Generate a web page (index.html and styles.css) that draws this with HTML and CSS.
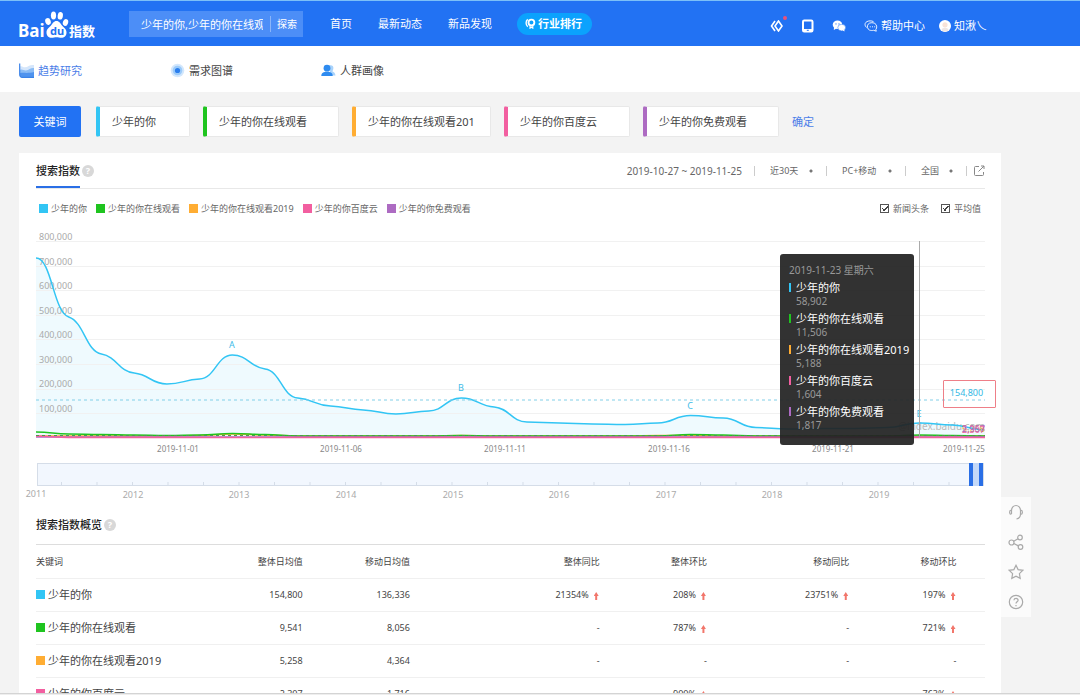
FILE: index.html
```html
<!DOCTYPE html>
<html lang="zh-CN">
<head>
<meta charset="utf-8">
<meta name="viewport" content="width=device-width, initial-scale=1">
<title>百度指数</title>
<link rel="stylesheet" href="styles.css">
</head>
<body>
<header class="topbar">
  <a class="logo" href="#" aria-label="Baidu 指数">
    <svg viewBox="0 0 80 30" width="80" height="30">
      <text class="logo-latin" x="0" y="26">Bai</text>
      <g fill="#fff">
        <ellipse cx="30" cy="10.500" rx="2.700" ry="3.400" transform="rotate(-20 30 10.500)"/>
        <ellipse cx="35.500" cy="4.500" rx="2.600" ry="3.900"/>
        <ellipse cx="42.300" cy="4.800" rx="2.600" ry="3.800" transform="rotate(8 42.300 4.800)"/>
        <ellipse cx="47.500" cy="11.500" rx="2.600" ry="3.400" transform="rotate(20 47.500 11.500)"/>
        <path d="M38.500 10c2.800 0 4 2.500 5.500 4.400 1.800 2.200 4.500 3.400 4.500 7.100 0 3.500-2.400 5.300-5.100 5.300-1.700 0-3.100-.6-4.900-.6s-3.200.6-4.900.6c-2.800 0-5.100-1.900-5.100-5.300 0-3.700 2.700-4.900 4.500-7.100 1.500-1.900 2.700-4.400 5.500-4.400z"/>
      </g>
      <text class="logo-du" x="32" y="24">du</text>
      <text class="logo-cjk" x="51" y="25">指数</text>
    </svg>
  </a>
  <form class="search">
    <input class="search-input" type="text" aria-label="关键词搜索" value="少年的你,少年的你在线观看,少年的你在线观看2019">
    <button class="search-button" type="button">探索</button>
  </form>
  <nav class="main-nav">
    <a href="#">首页</a>
    <a href="#">最新动态</a>
    <a href="#">新品发现</a>
  </nav>
  <a class="rank-pill" href="#">
    <svg viewBox="0 0 12 12" width="11" height="11" fill="none" stroke="#fff"><path d="M3 1.500C.6 3.500.6 7.500 3 9.500" stroke-width="1.500"/><circle cx="7" cy="5" r="3.200" stroke-width="2"/><path d="M5.500 8v3l1.500-1 1.500 1V8" stroke-width="1.300"/></svg>
    行业排行
  </a>
  <div class="tools">
    <a class="tool-code" href="#" aria-label="开放平台">
      <svg viewBox="0 0 14 12" width="14" height="12" fill="none" stroke="#fff" stroke-width="1.600"><path d="M5 1 1.500 6 5 11"/><path d="M8.500 1 5 6l3.500 5L12 6z"/></svg>
      <span class="badge"></span>
    </a>
    <a href="#" aria-label="手机版">
      <svg viewBox="0 0 12 14" width="12" height="14"><rect x="1" y="1.500" width="9.500" height="11" rx="1.200" fill="none" stroke="#fff" stroke-width="2"/><path d="M1 10h9.500v3H1z" fill="#fff"/><path d="M4.800 11.300h2" stroke="#2272f3"/></svg>
    </a>
    <a href="#" aria-label="微信">
      <svg viewBox="0 0 14 12" width="14" height="12"><ellipse cx="5.500" cy="4.800" rx="4.800" ry="4.200" fill="#fff"/><path d="M2 7.500 1.800 10 4.500 8.500z" fill="#fff"/><ellipse cx="9.700" cy="7.600" rx="3.900" ry="3.300" fill="#fff" stroke="#2272f3" stroke-width=".5"/><path d="m10.500 10.300 2 1.200-.2-2z" fill="#fff"/><g fill="#2272f3"><circle cx="4" cy="3.900" r=".6"/><circle cx="7" cy="3.900" r=".6"/></g></svg>
    </a>
    <a class="tool-text tool-help" href="#">
      <svg viewBox="0 0 14 12" width="14" height="12" fill="none" stroke="#fff" stroke-width=".9"><path d="M2.500 7.500C.5 5.500.5 3 2.800 1.700 4.600.6 7.500.6 9.500 1.600"/><path d="M11.800 9.600c1.600-1.900 1-5.100-1-6.200-2.200-1.200-5.400-.8-6.600.8-1.500 2-.9 4.700 1.200 5.800 1.300.6 2.900.7 4.200.3l2.700.9z"/><path d="M5.800 6.800h1M8 6.800h1M10.200 6.800h1"/></svg>
      帮助中心
    </a>
    <a class="tool-text tool-user" href="#">
      <svg viewBox="0 0 12 12" width="12" height="12"><circle cx="6" cy="6" r="6" fill="#fff"/><circle cx="6" cy="4.800" r="2.600" fill="#f8e3d8"/><path d="M2.500 10c.5-3 6.500-3 7 0-2 2-5 2-7 0z" fill="#eee6e4"/></svg>
      知湫乀
    </a>
  </div>
</header>

<nav class="subnav">
  <a class="subnav-link is-active" href="#">
    <svg viewBox="0 0 15 15" width="15" height="15"><path d="M1 3.500c2-1 3 1 5 .8 3-.3 5-3 9-2.300v12H3a2 2 0 0 1-2-2z" fill="#d5e6fb"/><path d="M1 7c2-1.500 3.500.6 6 .4C10 7 12 4.500 15 5v9H3a2 2 0 0 1-2-2z" fill="#8bbcf5"/><path d="M1 10c4-.5 9 .5 14-1v5.500H3a2 2 0 0 1-2-2z" fill="#4f93ee"/><path d="M.7.500v11.300a2.500 2.500 0 0 0 2.500 2.500H15" fill="none" stroke="#3a82e8" stroke-width="1.200"/></svg>
    趋势研究
  </a>
  <a class="subnav-link" href="#">
    <svg viewBox="0 0 15 15" width="15" height="15"><circle cx="7.500" cy="7.500" r="6.800" fill="#d3e7fc"/><circle cx="7.500" cy="7.500" r="4.800" fill="#9ccbfa"/><circle cx="7.500" cy="7.500" r="2.600" fill="#2a7eed"/></svg>
    需求图谱
  </a>
  <a class="subnav-link" href="#">
    <svg viewBox="0 0 15 15" width="15" height="15"><path d="M8 2.500c3-1 5 .8 4.300 3.500-.3 1.200-.8 1.800-.8 2.500 1.500.8 2.800 1.500 3 4h-5z" fill="#a9d3fb"/><circle cx="6" cy="5.200" r="3.400" fill="#2e8bf0"/><path d="M.3 13c0-3 2.200-4.300 5.700-4.300s5.700 1.300 5.700 4.300z" fill="#2e8bf0"/></svg>
    人群画像
  </a>
</nav>

<main class="content">
  <form class="keywords">
    <button class="keyword-button" type="button">关键词</button>
    <input class="chip chip-short c-blue" type="text" aria-label="关键词一" value="少年的你">
    <input class="chip chip-long c-green" type="text" aria-label="关键词二" value="少年的你在线观看">
    <input class="chip chip-longest c-orange" type="text" aria-label="关键词三" value="少年的你在线观看2019">
    <input class="chip chip-medium c-pink" type="text" aria-label="关键词四" value="少年的你百度云">
    <input class="chip chip-long c-purple" type="text" aria-label="关键词五" value="少年的你免费观看">
    <button class="confirm" type="button">确定</button>
  </form>

  <section class="card">
    <div class="card-head">
      <h2 class="tab-title">搜索指数</h2>
      <span class="hint">?</span>
      <div class="filters">
        <span class="dates">2019-10-27 ~ 2019-11-25</span>
        <div class="filter filter-range"><select aria-label="时间范围"><option>近30天</option></select></div>
        <div class="filter filter-device"><select aria-label="设备"><option>PC+移动</option></select></div>
        <div class="filter filter-region"><select aria-label="地区"><option>全国</option></select></div>
        <button class="export" type="button" aria-label="导出">
          <svg viewBox="0 0 12 12" width="12" height="12" fill="none" stroke="#888"><path d="M6 1.500H2.500a1 1 0 0 0-1 1v7a1 1 0 0 0 1 1h7a1 1 0 0 0 1-1V7"/><path d="M8 1h3v3M11 1 5.500 6.500"/></svg>
        </button>
      </div>
    </div>

    <div class="legend-row">
      <ul class="legend">
        <li><i class="swatch c-blue"></i>少年的你</li>
        <li><i class="swatch c-green"></i>少年的你在线观看</li>
        <li><i class="swatch c-orange"></i>少年的你在线观看2019</li>
        <li><i class="swatch c-pink"></i>少年的你百度云</li>
        <li><i class="swatch c-purple"></i>少年的你免费观看</li>
      </ul>
      <div class="toggles">
        <label><input type="checkbox" checked>新闻头条</label>
        <label><input type="checkbox" checked>平均值</label>
      </div>
    </div>

    <div class="chart">
      <svg class="plot" id="plot" viewBox="0 0 949 230">
        <path class="grid" d="M0 13.500H949M0 38.500H949M0 62.500H949M0 87.500H949M0 111.500H949M0 136.500H949M0 161.500H949M0 185.500H949"/>
        <g class="y-labels">
          <text x="3" y="12">800,000</text><text x="3" y="37">700,000</text><text x="3" y="61">600,000</text><text x="3" y="86">500,000</text>
          <text x="3" y="110">400,000</text><text x="3" y="135">300,000</text><text x="3" y="159">200,000</text><text x="3" y="184">100,000</text>
        </g>
        <text class="watermark" x="949" y="202">@index.baidu.com</text>
        <g id="series"></g>
        <path class="average" d="M0 172H949"/>
        <path class="average average-green" d="M0 207.500H949"/>
        <g class="peaks">
          <text x="196" y="120">A</text><text x="425" y="163">B</text><text x="654" y="181">C</text><text x="883" y="189">E</text>
        </g>
        <path class="cursor" d="M883.500 13V210"/>
        <g class="end-labels">
          <text x="949" y="204" fill="#ffad33">5,258</text><text x="949" y="205" fill="#f25fa0">2,307</text><text x="949" y="204" fill="#ad6bc2">2,957</text>
        </g>
        <g class="x-labels">
          <text x="142" y="224">2019-11-01</text><text x="305" y="224">2019-11-06</text><text x="469" y="224">2019-11-11</text>
          <text x="633" y="224">2019-11-16</text><text x="797" y="224">2019-11-21</text><text x="928" y="224">2019-11-25</text>
        </g>
      </svg>
      <div class="average-tag">154,800</div>
      <div class="tooltip">
        <p class="tooltip-date">2019-11-23 星期六</p>
        <dl>
          <dt class="c-blue">少年的你</dt><dd>58,902</dd>
          <dt class="c-green">少年的你在线观看</dt><dd>11,506</dd>
          <dt class="c-orange">少年的你在线观看2019</dt><dd>5,188</dd>
          <dt class="c-pink">少年的你百度云</dt><dd>1,604</dd>
          <dt class="c-purple">少年的你免费观看</dt><dd>1,817</dd>
        </dl>
      </div>
    </div>

    <svg class="timeline" viewBox="0 0 949 47">
      <rect x="1.500" y="5.500" width="946" height="22" fill="#f2f7fe" stroke="#d5dde8"/>
      <path id="ticks" stroke="#d5dde8"/>
      <rect x="937" y="5" width="6" height="23" fill="#c3d8f8"/>
      <rect x="933" y="5" width="4" height="23" fill="#2a6fe6"/>
      <rect x="943" y="5" width="4" height="23" fill="#2a6fe6"/>
      <g class="years">
        <text x="0" y="39">2011</text><text x="97" y="40">2012</text><text x="203" y="40">2013</text><text x="310" y="40">2014</text><text x="417" y="40">2015</text>
        <text x="523" y="40">2016</text><text x="630" y="40">2017</text><text x="736" y="40">2018</text><text x="843" y="40">2019</text>
      </g>
    </svg>

    <div class="overview-head">
      <h2>搜索指数概览</h2>
      <span class="hint">?</span>
    </div>
    <table class="overview">
      <colgroup><col class="col-name"><col class="col-near"><col class="col-near"><col class="col-far"><col class="col-near"><col class="col-mid"><col class="col-near"><col></colgroup>
      <thead>
        <tr><th>关键词</th><th>整体日均值</th><th>移动日均值</th><th>整体同比</th><th>整体环比</th><th>移动同比</th><th>移动环比</th><td></td></tr>
      </thead>
      <tbody>
        <tr><th><i class="swatch c-blue"></i>少年的你</th><td>154,800</td><td>136,336</td><td class="up">21354%</td><td class="up">208%</td><td class="up">23751%</td><td class="up">197%</td><td></td></tr>
        <tr><th><i class="swatch c-green"></i>少年的你在线观看</th><td>9,541</td><td>8,056</td><td>-</td><td class="up">787%</td><td>-</td><td class="up">721%</td><td></td></tr>
        <tr><th><i class="swatch c-orange"></i>少年的你在线观看2019</th><td>5,258</td><td>4,364</td><td>-</td><td>-</td><td>-</td><td>-</td><td></td></tr>
        <tr><th><i class="swatch c-pink"></i>少年的你百度云</th><td>2,307</td><td>1,716</td><td></td><td class="up">900%</td><td></td><td class="up">763%</td><td></td></tr>
      </tbody>
    </table>
  </section>
</main>

<aside class="side-tools">
  <button type="button" aria-label="客服"><svg viewBox="0 0 16 16" width="16" height="16"><path d="M3.500 10V6.500a4.500 5 0 0 1 9 0V10c0 3-1.500 4.500-4 5M3.300 6C1 6.300 1 10.200 3.300 10.500M12.700 6c2.300.3 2.300 4.200 0 4.500"/></svg></button>
  <button type="button" aria-label="分享"><svg viewBox="0 0 16 16" width="16" height="16"><circle cx="3.500" cy="8.500" r="2.500"/><circle cx="12" cy="3.500" r="2.300"/><circle cx="12.500" cy="13" r="2.300"/><path d="m5.700 7.300 4.300-2.600M5.800 9.500l4.600 2.400"/></svg></button>
  <button type="button" aria-label="收藏"><svg viewBox="0 0 16 16" width="16" height="16"><path d="m8 1.300 2.100 4.300 4.800.7-3.500 3.300.8 4.800L8 12.200l-4.200 2.200.8-4.800L1.100 6.300l4.800-.7z"/></svg></button>
  <button type="button" aria-label="帮助"><svg viewBox="0 0 16 16" width="16" height="16"><circle cx="8" cy="8" r="6.700"/><path d="M5.900 6.300c.2-2.600 4.400-2.400 4.200 0-.1 1.500-2.100 1.500-2.100 3.200M8 11v1.200"/></svg></button>
</aside>
<footer class="statusbar"></footer>
<script src="chart.js"></script>
</body>
</html>
```

FILE: styles.css
```css
* { box-sizing: border-box; }

body {
  margin: 0;
  height: 100vh;
  display: flex;
  flex-direction: column;
  overflow: hidden;
  background: #f3f3f3;
  color: #444;
  font: 11px/16px "Noto Sans", "Noto Sans CJK SC", sans-serif;
}

a { color: inherit; text-decoration: none; }
h2, p, dl, dd, ul { margin: 0; padding: 0; }
button, input, select { font: inherit; color: inherit; border: 0; margin: 0; padding: 0; background: none; }
svg { display: block; flex: none; }

.c-blue { --tone: #32c5f4; }
.c-green { --tone: #1fc41f; }
.c-orange { --tone: #ffad33; }
.c-pink { --tone: #f25fa0; }
.c-purple { --tone: #ad6bc2; }

/* Top bar */
.topbar {
  flex: none;
  display: flex;
  align-items: center;
  height: 46px;
  padding: 0 93px 0 18px;
  border-top: 1px solid #7cc0f8;
  background: #2272f3;
  color: #fff;
}
.logo { margin: 5px 31px 0 0; }
.logo text { fill: #fff; font-family: "Noto Sans", "Noto Sans CJK SC", sans-serif; font-weight: 700; }
.logo .logo-latin { font-size: 17px; }
.logo .logo-du { font-size: 11px; fill: #2272f3; }
.logo .logo-cjk { font-size: 13px; }

.search { display: flex; align-items: center; width: 174px; height: 26px; padding-left: 12px; background: #4c8ef7; }
.search-input { width: 122px; height: 24px; }
.search-button { flex: 1; height: 16px; margin-left: 7px; border-left: 1px solid #8ab5fa; font-size: 10px; }

.main-nav { display: flex; gap: 26px; margin: 0 25px 0 27px; }
.rank-pill {
  display: flex;
  align-items: center;
  gap: 2px;
  height: 22px;
  padding: 0 10px 0 8px;
  border-radius: 11px;
  background: #0ba2fd;
  font-weight: 700;
}
.tools { display: flex; align-items: center; gap: 18px; margin: 4px 0 0 auto; }
.tool-code { position: relative; }
.badge { position: absolute; top: -4px; right: -3px; width: 4px; height: 4px; border-radius: 50%; background: #e8527a; }
.tool-text { display: flex; align-items: center; gap: 3px; }
.tool-user { margin-left: -4px; }

/* Section navigation */
.subnav { flex: none; display: flex; gap: 88px; height: 46px; padding: 3px 19px 0; background: #fff; }
.subnav-link { display: flex; align-items: center; gap: 4px; }
.is-active { color: #4a7de8; }

/* Keywords */
.content { flex: 1; min-height: 0; overflow: hidden; padding: 14px 79px 0 19px; }
.keywords { display: flex; gap: 13px; height: 31px; margin-bottom: 16px; }
.keyword-button { width: 62px; margin-right: 2px; border-radius: 2px; background: #2272f3; color: #fff; }
.chip {
  min-width: 0;
  padding: 0 15px 0 12px;
  border: 1px solid #e8e8e8;
  border-left: 4px solid var(--tone);
  border-radius: 2px;
  background: #fff;
}
.chip-short { width: 94px; }
.chip-medium { width: 126px; }
.chip-long { width: 136px; }
.chip-longest { width: 139px; }
.confirm { color: #4a7de8; }

/* Card */
.card { padding: 0 16px 100px 17px; background: #fff; }
.card-head { display: flex; height: 36px; border-bottom: 1px solid #e8e8e8; }
h2 { font-size: 11px; line-height: 16px; font-weight: 500; color: #222; }
.tab-title { padding-top: 10px; border-bottom: 2px solid #2a6fe6; }
.hint {
  width: 12px;
  height: 12px;
  border-radius: 50%;
  background: #d8d8d8;
  color: #fff;
  font-size: 9px;
  line-height: 12px;
  font-weight: 700;
  text-align: center;
}
.card-head .hint { margin: 12px 0 0 2px; }
.filters { display: flex; align-items: center; margin-left: auto; font-size: 9px; color: #666; }
.dates { margin-right: 12px; font-size: 10px; }
.filter { display: flex; align-items: center; height: 10px; padding-left: 15px; border-left: 1px solid #ccc; }
.filter select {
  width: 100%;
  appearance: none;
  background: radial-gradient(circle, #777 1px, transparent 2px) right 13px center / 4px 4px no-repeat;
}
.filter-range { width: 72px; }
.filter-device { width: 79px; }
.filter-region { width: 61px; }
.export { display: flex; align-items: center; height: 10px; padding-left: 6px; border-left: 1px solid #ccc; }

.legend-row { display: flex; justify-content: space-between; align-items: center; height: 39px; padding: 0 4px 0 3px; font-size: 9px; color: #666; }
.legend { display: flex; gap: 9px; list-style: none; }
.legend li { display: flex; align-items: center; gap: 3px; }
.swatch { display: inline-block; flex: none; width: 9px; height: 9px; background: var(--tone); }
.toggles { display: flex; gap: 12px; }
.toggles label { display: flex; align-items: center; gap: 4px; }
.toggles input {
  appearance: none;
  width: 9px;
  height: 9px;
  border: 1px solid #555;
}
.toggles input:checked {
  background:
    linear-gradient(45deg, transparent 40%, #444 40% 60%, transparent 60%) 1px 3px / 3px 3px no-repeat,
    linear-gradient(-45deg, transparent 40%, #444 40% 60%, transparent 60%) 2px 1px / 5px 5px no-repeat;
}

/* Chart */
.chart { position: relative; }
.plot, .timeline { width: 100%; height: auto; overflow: visible; }
.grid { stroke: #f1f1f1; }
.y-labels, .years { fill: #aaa; font-size: 9px; }
.years, .x-labels, .peaks { text-anchor: middle; }
.x-labels { fill: #888; font-size: 8px; }
.peaks { fill: #3dbce8; font-size: 9px; }
.watermark { fill: #bbb; font-size: 10px; text-anchor: end; }
.end-labels { font-size: 9px; text-anchor: end; }
.line { fill: none; stroke: var(--tone); stroke-width: 1.5px; }
.area { fill: #effafe; }
.average { fill: none; stroke: #82cfe8; stroke-dasharray: 3 3; }
.average-green { stroke: #4e9a4e; }
.cursor { stroke: #aaa; }
.average-tag {
  position: absolute;
  top: 152px;
  right: -11px;
  width: 53px;
  padding: 4px 6px 6px 0;
  border: 1px solid #ee7f88;
  border-radius: 1px;
  color: #32b8e4;
  font-size: 9px;
  text-align: center;
}
.tooltip {
  position: absolute;
  top: 26px;
  right: 71px;
  width: 134px;
  padding: 9px 0 11px 9px;
  border-radius: 3px;
  background: rgba(34, 34, 34, 0.93);
  color: #999;
  font-size: 10px;
  white-space: nowrap;
}
.tooltip-date { margin-bottom: 1px; line-height: 15px; }
.tooltip dt { position: relative; padding-left: 7px; font-size: 11px; line-height: 17px; color: #fff; }
.tooltip dt::before { content: ""; position: absolute; left: 0; top: 4px; width: 2px; height: 9px; background: var(--tone); }
.tooltip dd { padding-left: 7px; margin-bottom: 3px; line-height: 11px; }

/* Overview table */
.overview-head { display: flex; align-items: center; gap: 2px; height: 39px; }
.overview { width: 100%; table-layout: fixed; border-collapse: collapse; border-top: 1px solid #ddd; font-size: 9px; }
.col-name { width: 16.8%; }
.col-near { width: 11.3%; }
.col-far { width: 20%; }
.col-mid { width: 15%; }
.overview th, .overview td { height: 33px; padding: 0; border-bottom: 1px solid #f0f0f0; font-weight: 400; text-align: right; white-space: nowrap; }
.overview thead th { height: 34px; }
.overview th:first-child { text-align: left; }
.overview tbody th { font-size: 11px; }
.overview .swatch { margin-right: 3px; }
.up::after {
  content: "";
  display: inline-block;
  width: 5px;
  height: 8px;
  margin: 0 1px 0 5px;
  vertical-align: -2px;
  background: #f2766b;
  clip-path: polygon(50% 0, 100% 50%, 70% 50%, 70% 100%, 30% 100%, 30% 50%, 0 50%);
}

/* Floating tools */
.side-tools { position: fixed; right: 49px; bottom: 78px; width: 30px; background: #fbfbfb; }
.side-tools button { display: grid; place-items: center; width: 100%; height: 30px; }
.side-tools svg { fill: none; stroke: #aaa; stroke-width: 1.2px; }

.statusbar { flex: none; height: 2px; border-top: 1px solid #d4d4d4; background: #eee; }
```

FILE: chart.js
```js
const STEP = 949 / 29;
const BASE = 209;

// Plot heights, one per day
const series = [
  { tone: "c-blue", area: true, y: [30, 89, 126, 145, 156, 151, 127, 141, 170, 178, 182, 186, 183, 170, 179, 194, 195, 196, 196.5, 195, 187.5, 190, 199.5, 201, 200.5, 200.5, 199.5, 195, 197, 202] },
  { tone: "c-orange", y: [208, 208, 208, 208, 208, 207.5, 206, 207, 208, 208, 208, 208, 208, 207.5, 208, 208, 208, 208, 208, 207.5, 207.5, 208, 208, 208, 208, 208, 208, 208, 208, 208] },
  { tone: "c-green", y: [204, 206, 206.5, 207, 207.5, 207, 205.5, 206.5, 208, 208, 208, 208, 208, 207.5, 208, 208, 208, 208, 208, 208, 206.5, 207, 208, 208, 208, 208, 208, 207, 207.5, 208] },
  { tone: "c-purple", y: Array(30).fill(209) },
  { tone: "c-pink", y: [208, ...Array(29).fill(209.5)] },
];

function smooth(y) {
  const slope = y.map((v, i) => {
    if (i === 0 || i === y.length - 1) return 0;
    const a = v - y[i - 1];
    const b = y[i + 1] - v;
    return a * b > 0 ? 0.3 * Math.sign(a) * Math.min(Math.abs(a), Math.abs(b)) : 0;
  });
  let d = `M0 ${y[0]}`;
  for (let i = 1; i < y.length; i++) {
    const x0 = (i - 1) * STEP;
    const x1 = i * STEP;
    const h = 0.48;
    d += `C${x0 + STEP * h} ${y[i - 1] + slope[i - 1] * h} ${x1 - STEP * h} ${y[i] - slope[i] * h} ${x1} ${y[i]}`;
  }
  return d;
}

function addPath(parent, className, d) {
  const path = document.createElementNS("http://www.w3.org/2000/svg", "path");
  path.setAttribute("class", className);
  path.setAttribute("d", d);
  parent.appendChild(path);
}

const group = document.getElementById("series");
for (const s of series) {
  const d = smooth(s.y);
  if (s.area) {
    // The fill sits behind the grid and the axis labels
    const plot = document.getElementById("plot");
    addPath(plot, "area", `${d}L949 ${BASE}L0 ${BASE}Z`);
    plot.prepend(plot.lastChild);
  }
  addPath(group, `line ${s.tone}`, d);
}

let ticks = "";
for (let x = 25.5; x < 930; x += 35.5) ticks += `M${x} 24V28`;
document.getElementById("ticks").setAttribute("d", ticks);
```
